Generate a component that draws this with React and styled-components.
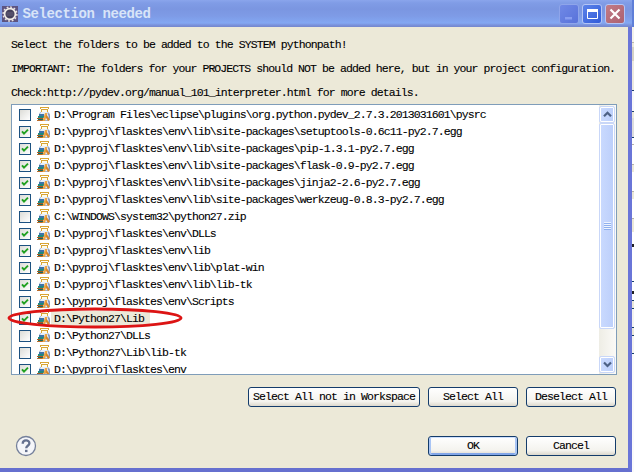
import React from "react";
import styled, { createGlobalStyle, css } from "styled-components";

const GlobalStyle = createGlobalStyle`
  *, *::before, *::after { box-sizing: border-box; }
  html, body { margin: 0; padding: 0; overflow: hidden; }
`;

const Screen = styled.div`
  display: flex;
  width: 634px;
  height: 472px;
  overflow: hidden;
  font-family: "Liberation Mono", monospace;
  font-size: 11.5px;
  letter-spacing: -0.906px;
  color: #000;
  -webkit-text-stroke: 0.1px #000;
`;

const Dialog = styled.section`
  display: flex;
  flex-direction: column;
  width: 632px;
  height: 472px;
  background: #ece9d8;
  border-right: 4px solid #6a75d8;
  border-bottom: 4px solid #6670cf;
`;

const TitleBar = styled.header`
  display: flex;
  align-items: center;
  flex: none;
  width: 632px;
  height: 27px;
  padding: 0 7px 0 2px;
  background: linear-gradient(#8aa5ec 0, #809ce6 3px, #7b96e1 9px, #7e9be6 16px, #83a7f2 23px, #7a92dc 25px, #7486cc 27px);
`;

const Title = styled.h1`
  flex: 1;
  margin: 0 0 0 4.5px;
  font-size: 14px;
  font-weight: bold;
  letter-spacing: -0.4px;
  line-height: 28px;
  color: #d8e4f8;
  -webkit-text-stroke: 0;
`;

const WindowButtons = styled.div`
  display: flex;
  gap: 3px;
`;

const captionTones = {
  dim: "linear-gradient(135deg, #7089e6, #5872da)",
  blue: "linear-gradient(135deg, #5c83e9, #315bd9)",
  red: "linear-gradient(135deg, #c27b86, #ac6171)",
};

const CaptionButton = styled.button`
  display: grid;
  place-items: center;
  width: 20px;
  height: 20px;
  padding: 0;
  border: 1px solid ${(p) => (p.$tone === "dim" ? "#8fa5ea" : "#b4c5f5")};
  border-radius: 3px;
  background: ${(p) => captionTones[p.$tone]};
`;

const Content = styled.main`
  display: flex;
  flex-direction: column;
  flex: 1;
  padding: 6px 12px 0 11px;
`;

const Message = styled.p`
  margin: 0;
  height: 24px;
  line-height: 24px;
  white-space: pre;
  &:nth-of-type(2) { letter-spacing: -0.92px; }
  &:nth-of-type(3) { height: 23px; }
`;

const ListBox = styled.div`
  position: relative;
  display: flex;
  flex: none;
  width: 606px;
  height: 271px;
  background: #fff;
  border: 1px solid #7f9db9;
`;

const Rows = styled.ul`
  flex: 1;
  height: 269px;
  margin: 0;
  padding: 1px 0 0 7px;
  overflow: hidden;
  list-style: none;
`;

const Row = styled.li`
  display: flex;
  align-items: center;
  height: 17px;
`;

const CheckBox = styled.span`
  display: grid;
  place-items: center;
  flex: none;
  width: 12px;
  height: 12px;
  margin: 1px 6px 0 0;
  border: 1px solid #1c5180;
  background: linear-gradient(135deg, #dcdcd7, #fff);
`;

const RowIcon = styled.svg`
  flex: none;
  display: block;
`;

const RowLabel = styled.span`
  height: 16px;
  margin-left: 1px;
  padding: 0 6px 0 3px;
  line-height: 16px;
  white-space: pre;
  background: ${(p) => (p.$selected ? "#ece9d8" : "transparent")};
`;

const ScrollBar = styled.div`
  display: flex;
  flex-direction: column;
  width: 17px;
  height: 269px;
  padding: 1px 1px 1px 0;
  background: linear-gradient(90deg, #eeede5, #fbfaf7);
`;

const scrollSurface = css`
  display: grid;
  place-items: center;
  border: 1px solid #c9d7f8;
  border-radius: 2px;
  box-shadow: inset 0 0 0 1px #fff;
  background: linear-gradient(90deg, #cadafe, #bccffb);
`;

const ScrollArrow = styled.div`
  ${scrollSurface}
  flex: none;
  height: 17px;
`;

const ScrollThumb = styled.div`
  ${scrollSurface}
  flex: none;
  height: 206px;
  margin-bottom: auto;
`;

const Grip = styled.div`
  width: 7px;
  height: 8px;
  background: repeating-linear-gradient(#eef4fe 0 1px, #8fb0ee 1px 2px);
`;

const Annotation = styled.svg`
  position: absolute;
  left: -5px;
  top: 200px;
  overflow: visible;
`;

const ButtonRow = styled.div`
  display: flex;
  justify-content: flex-end;
  gap: 8px;
  margin-top: 12px;
`;

const Button = styled.button`
  width: ${(p) => p.$width || 90}px;
  height: 20px;
  padding: 0;
  border: 1px solid #143c6b;
  border-radius: 3px;
  background: linear-gradient(#fff, #f4f3ee 75%, #dcd8cd);
  box-shadow: ${(p) => (p.$primary ? "inset 0 1px #cee0fd, inset 2px 0 #a9c5f5, inset -2px 0 #a9c5f5, inset 0 -2px #82a6e8" : "none")};
  font: inherit;
  letter-spacing: inherit;
  line-height: 18px;
  color: #000;
  white-space: nowrap;
`;

const Footer = styled.footer`
  display: flex;
  align-items: center;
  gap: 8px;
  height: 22px;
  margin: 28px 0 0 4px;
`;

const HelpIcon = styled.svg`
  margin-right: auto;
`;

const Backdrop = styled.aside`
  width: 2px;
  display: flex;
  flex-direction: column;
`;

const Slice = styled.div`
  flex: none;
  height: ${(p) => p.$h}px;
  background: ${(p) => p.$c};
`;

const backdropSlices = [
  [27, "#5f7fd8"], [15, "#f4f2ea"], [1, "#b9b6ad"], [4, "#ece9d8"], [14, "#d5d2c6"],
  [29, "#ece9e0"], [1, "#1c3d6b"], [20, "#f8f8f8"], [1, "#1c3d6b"], [6, "#ece9d8"],
  [19, "#ddd"], [1, "#143c6b"], [6, "#fff"], [1, "#b5b2a8"], [19, "#fff"],
  [1, "#b5b2a8"], [7, "#ece9d8"], [19, "#fff"], [1, "#b5b2a8"], [7, "#ece9d8"],
  [19, "#fff"], [1, "#b5b2a8"], [13, "#ece9d8"], [12, "#fff"], [3, "#222"],
  [34, "#fff"], [1, "#143c6b"], [9, "#fff"], [3, "#222"], [6, "#fff"],
  [1, "#143c6b"], [7, "#ece9d8"], [1, "#143c6b"], [18, "#f5f4ef"], [1, "#143c6b"],
  [7, "#ece9d8"], [1, "#143c6b"], [17, "#f5f4ef"], [1, "#143c6b"], [118, "#fafafa"],
];

const env = "D:\\pyproj\\flasktes\\env";
const folders = [
  { path: "D:\\Program Files\\eclipse\\plugins\\org.python.pydev_2.7.3.2013031601\\pysrc", checked: false },
  { path: env + "\\lib\\site-packages\\setuptools-0.6c11-py2.7.egg", checked: true },
  { path: env + "\\lib\\site-packages\\pip-1.3.1-py2.7.egg", checked: true },
  { path: env + "\\lib\\site-packages\\flask-0.9-py2.7.egg", checked: true },
  { path: env + "\\lib\\site-packages\\jinja2-2.6-py2.7.egg", checked: true },
  { path: env + "\\lib\\site-packages\\werkzeug-0.8.3-py2.7.egg", checked: true },
  { path: "C:\\WINDOWS\\system32\\python27.zip", checked: false },
  { path: env + "\\DLLs", checked: true },
  { path: env + "\\lib", checked: true },
  { path: env + "\\lib\\plat-win", checked: true },
  { path: env + "\\lib\\lib-tk", checked: true },
  { path: env + "\\Scripts", checked: true },
  { path: "D:\\Python27\\Lib", checked: true, selected: true },
  { path: "D:\\Python27\\DLLs", checked: false },
  { path: "D:\\Python27\\Lib\\lib-tk", checked: false },
  { path: env, checked: true },
];

const AppIcon = () => (
  <svg width="16" height="16" viewBox="0 0 16 16">
    <rect width="16" height="16" fill="#5d5480" />
    <circle cx="8" cy="8" r="6.9" fill="none" stroke="#e9e4e0" strokeWidth="1.5" strokeDasharray="1.8 1.81" />
    <circle cx="8" cy="8" r="5.4" fill="#45405a" stroke="#f4efe9" strokeWidth="1.7" />
    <path d="M4.500 7h7M4.500 9h7" stroke="#706b83" strokeWidth=".8" />
  </svg>
);

const LibraryIcon = () => (
  <RowIcon width="13" height="17" viewBox="0 0 13 17">
    {/* jar body and its shaded right side */}
    <path d="M4.500 5.500C3 6.500 2.500 7.500 2.500 9v5.500h9c1.200-2 1.300-5 .6-6.500-.4-1-1-2-2.100-2.500z" fill="#e6eefa" stroke="#a3b3d2" />
    <path d="M11.500 7.500c1 2 .9 4.500 0 6.500" fill="none" stroke="#7288b5" strokeWidth="1.200" />
    {/* gold lid */}
    <path d="M4 3h7v3H4z" fill="#fffbe9" />
    <path d="M3 1h9v1H3zM3 2h1v1H3zM11 2h1v1h-1zM4 3h7v1H4zM4 4h1v2H4zM10 4h1v2h-1z" fill="#d9a535" />
    {/* stacked books */}
    <path d="M2 8h5v2H2z" fill="#3b73aa" />
    <path d="M1 10h6v2H1z" fill="#1f8880" />
    <path d="M0 12h6v1H0z" fill="#a85a24" />
    <path d="M1 13h6v1H1z" fill="#14695f" />
    <path d="M0 14h8v1H0z" fill="#bb6c2b" />
    {/* leaning books */}
    <path d="M8 7h2.500L8 15H5.500z" fill="#eda545" />
    <path d="M9.500 8.500L13 14l-2 1-2.500-4z" fill="#d5862a" />
  </RowIcon>
);

const CheckMark = () => (
  <svg width="8" height="8" viewBox="0 0 8 8">
    <path d="M1 3.300L3 5.600 7 1.600" fill="none" stroke="#21a121" strokeWidth="1.900" />
  </svg>
);

const Chevron = ({ down }) => (
  <svg width="9" height="7" viewBox="0 0 9 7">
    <path d={down ? "M1 1.500L4.500 5 8 1.500" : "M1 5.300L4.500 1.800 8 5.300"} fill="none" stroke="#4d6185" strokeWidth="2.200" />
  </svg>
);

export default function App() {
  return (
    <>
      <GlobalStyle />
      <Screen>
        <Dialog>
          <TitleBar>
            <AppIcon />
            <Title>Selection needed</Title>
            <WindowButtons>
              <CaptionButton $tone="dim" aria-label="Minimize">
                <svg width="14" height="14"><path d="M3 10h7v2.500H3z" fill="#879df0" /></svg>
              </CaptionButton>
              <CaptionButton $tone="blue" aria-label="Maximize">
                <svg width="14" height="14"><path d="M2.500 2.500h10v9h-10z" fill="none" stroke="#fff" /><path d="M2 2h11v3H2z" fill="#fff" /></svg>
              </CaptionButton>
              <CaptionButton $tone="red" aria-label="Close">
                <svg width="14" height="14"><path d="M2.500 2.500l9 9m0-9l-9 9" stroke="#fff" strokeWidth="2.200" /></svg>
              </CaptionButton>
            </WindowButtons>
          </TitleBar>
          <Content>
            <Message>Select the folders to be added to the SYSTEM pythonpath!</Message>
            <Message>IMPORTANT: The folders for your PROJECTS should NOT be added here, but in your project configuration.</Message>
            <Message>Check:http://pydev.org/manual_101_interpreter.html for more details.</Message>
            <ListBox>
              <Rows>
                {folders.map((f) => (
                  <Row key={f.path}>
                    <CheckBox>{f.checked && <CheckMark />}</CheckBox>
                    <LibraryIcon />
                    <RowLabel $selected={f.selected}>{f.path}</RowLabel>
                  </Row>
                ))}
              </Rows>
              <ScrollBar>
                <ScrollArrow><Chevron /></ScrollArrow>
                <ScrollThumb><Grip /></ScrollThumb>
                <ScrollArrow><Chevron down /></ScrollArrow>
              </ScrollBar>
              <Annotation width="176" height="24" viewBox="0 0 176 24">
                <ellipse cx="88" cy="13" rx="86" ry="9" fill="none" stroke="#dc1414" strokeWidth="2.900" />
              </Annotation>
            </ListBox>
            <ButtonRow>
              <Button $width={172}>Select All not in Workspace</Button>
              <Button>Select All</Button>
              <Button>Deselect All</Button>
            </ButtonRow>
            <Footer>
              <HelpIcon width="22" height="22" viewBox="0 0 22 22">
                <circle cx="11" cy="11" r="9.500" fill="#f5f6fa" stroke="#75809b" strokeWidth="1.300" />
                <path d="M7.700 8.800C7.700 4.300 14.400 4.500 14.400 8.200c0 2.500-3.200 2.600-3.200 5" fill="none" stroke="#65718f" strokeWidth="2.300" />
                <path d="M10 14.800h2.500v2.300H10z" fill="#65718f" />
              </HelpIcon>
              <Button $primary>OK</Button>
              <Button>Cancel</Button>
            </Footer>
          </Content>
        </Dialog>
        <Backdrop>
          {backdropSlices.map(([h, c], i) => <Slice key={i} $h={h} $c={c} />)}
        </Backdrop>
      </Screen>
    </>
  );
}
